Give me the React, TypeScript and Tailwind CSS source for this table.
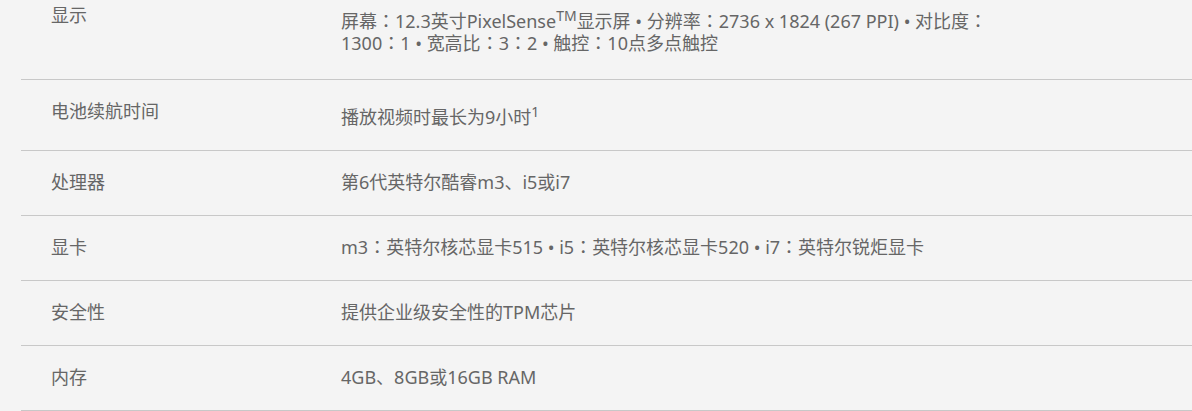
const Colon = () => <span className="leading-none" style={{ fontFamily: '"Noto Sans CJK JP", sans-serif' }}>：</span>;
const Dot = () => <span className="leading-none"> • </span>;

const specs: { label: string; value: React.ReactNode; sup?: boolean }[] = [
  {
    label: '显示',
    sup: true,
    value: (
      <>
        屏幕<Colon />12.3英寸PixelSense<sup className="text-[14px]">TM</sup>显示屏<Dot />分辨率<Colon />2736 x 1824 (267 PPI)<Dot />对比度<Colon />
        <br />
        1300<Colon />1<Dot />宽高比<Colon />3<Colon />2<Dot />触控<Colon />10点多点触控
      </>
    ),
  },
  {
    label: '电池续航时间',
    sup: true,
    value: (
      <>
        播放视频时最长为9小时<sup className="text-[14px]">1</sup>
      </>
    ),
  },
  { label: '处理器', value: '第6代英特尔酷睿m3、i5或i7' },
  {
    label: '显卡',
    value: (
      <>
        m3<Colon />英特尔核芯显卡515<Dot />i5<Colon />英特尔核芯显卡520<Dot />i7<Colon />英特尔锐炬显卡
      </>
    ),
  },
  { label: '安全性', value: '提供企业级安全性的TPM芯片' },
  { label: '内存', value: '4GB、8GB或16GB RAM' },
];

export default function App() {
  return (
    <div
      className="min-h-screen w-full overflow-hidden bg-[#f4f4f4] text-[#666666]"
      style={{ fontFamily: '"Noto Sans", "Noto Sans CJK SC", sans-serif' }}
    >
      {/* spec table, page scrolled so first row is cut off at top */}
      <div className="ml-[21px] mt-[-16px]">
        {specs.map((row, i) => (
          <div key={i} className="flex h-[65px] border-b border-[#c8c8c8] text-[18px] leading-[22px] first:h-[96px] [&:nth-child(2)]:h-[71px]">
            <div className="w-[320px] shrink-0 pl-[30px] pt-[20px]">{row.label}</div>
            <div className={`flex-1 pr-4 ${row.sup ? 'pt-[26px]' : 'pt-[20px]'}`}>{row.value}</div>
          </div>
        ))}
      </div>
    </div>
  );
}
